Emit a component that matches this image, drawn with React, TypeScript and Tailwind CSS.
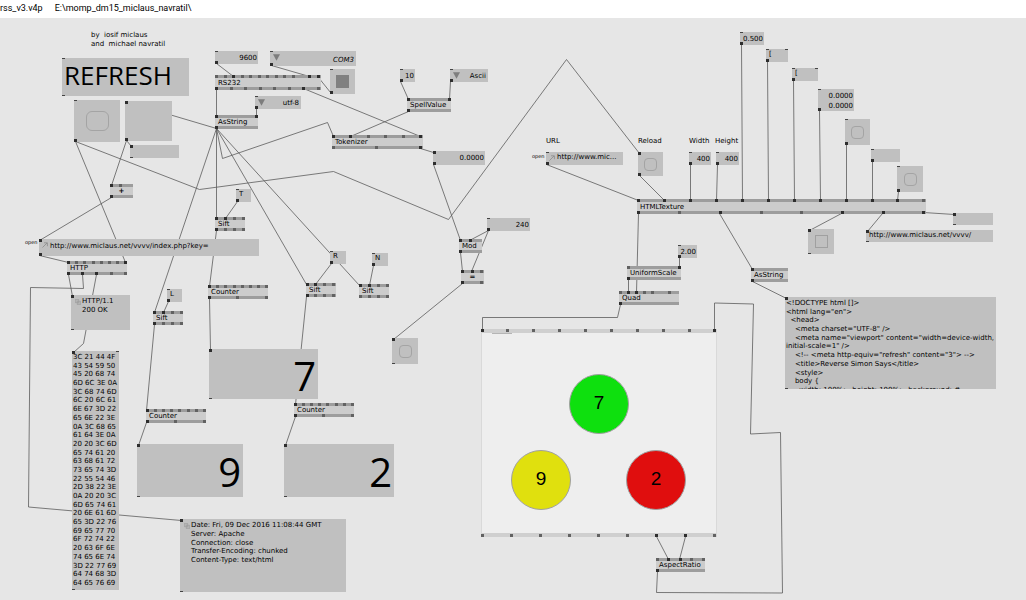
import React from "react";

/* Height of the title strip; node and wire coordinates are in window space. */
const STRIP = 18;

type Box = { x: number; y: number; w: number; h: number };

/* Pins are listed by centre x; a trailing * marks a connected pin. */
function Pins({ list, x, edge, onBar }: { list: string; x: number; edge: "top" | "bottom"; onBar?: boolean }) {
  return (
    <>
      {list.split(" ").filter(Boolean).map((p) => {
        const linked = p.endsWith("*");
        const left = parseInt(p, 10) - 2 - x;
        const size = linked ? "h-[3px] bg-[#2e2e2e]" : onBar ? "h-[3px] bg-[#626262]" : "h-px bg-[#444444]";
        const side = edge === "top" ? "top-0" : "bottom-0";
        return <span key={p} className={`pointer-events-none absolute w-[3px] ${side} ${size}`} style={{ left }} />;
      })}
    </>
  );
}

function place(b: Box) {
  return { left: b.x, top: b.y - STRIP, width: b.w, height: b.h };
}

/* ---------- operator nodes ---------- */

type Op = Box & { label: string; ins: string; outs: string; center?: boolean };

const ops: Op[] = [
  { label: "RS232", x: 215, y: 75, w: 106, h: 15, ins: "217 226 234* 243 251 260 268 277 285 294 310* 319*", outs: "217* 232 246 261 275 290 304* 319" },
  { label: "AsString", x: 215, y: 115, w: 43, h: 14, ins: "217* 257*", outs: "217*" },
  { label: "SpellValue", x: 407, y: 98, w: 44, h: 14, ins: "409* 450*", outs: "409*" },
  { label: "Tokenizer", x: 332, y: 135, w: 91, h: 14, ins: "334* 351* 369 386 404 421*", outs: "334 377 421*" },
  { label: "+", x: 110, y: 184, w: 23, h: 14, ins: "112* 121", outs: "112*", center: true },
  { label: "HTTP", x: 67, y: 261, w: 60, h: 14, ins: "69* 77 85 94 102 110 118 126*", outs: "69* 83* 97* 112 126" },
  { label: "Sift", x: 215, y: 217, w: 30, h: 14, ins: "217* 226* 235 244", outs: "217* 226 235 244" },
  { label: "Counter", x: 208, y: 285, w: 60, h: 14, ins: "210* 218 226 235 243 251 259 267", outs: "210* 238 267" },
  { label: "Sift", x: 153, y: 311, w: 30, h: 14, ins: "155* 164* 173 182", outs: "155* 164 173 182" },
  { label: "Sift", x: 306, y: 283, w: 30, h: 14, ins: "308* 316* 325 334", outs: "308* 316 325 334" },
  { label: "Sift", x: 359, y: 284, w: 30, h: 14, ins: "361* 370* 379 388", outs: "361 370 379 388" },
  { label: "Counter", x: 146, y: 409, w: 60, h: 14, ins: "148* 156 164 172 180 189 197 205", outs: "148* 176 205" },
  { label: "Counter", x: 294, y: 403, w: 60, h: 14, ins: "296* 304 312 320 328 337 345 353", outs: "296* 324 353" },
  { label: "Mod", x: 459, y: 239, w: 23, h: 14, ins: "461* 471*", outs: "461*" },
  { label: "=", x: 461, y: 270, w: 23, h: 14, ins: "463* 473* 482", outs: "463* 482", center: true },
  { label: "HTMLTexture", x: 637, y: 199, w: 289, h: 15, ins: "639* 665* 691* 717* 743* 769* 795* 821* 847* 873* 898* 924", outs: "639* 680 721* 762 802 843* 884* 924*" },
  { label: "UniformScale", x: 627, y: 266, w: 54, h: 14, ins: "629 680*", outs: "629*" },
  { label: "Quad", x: 619, y: 291, w: 60, h: 14, ins: "621 629* 637* 645 653 670", outs: "621*" },
  { label: "AsString", x: 751, y: 268, w: 37, h: 14, ins: "753*", outs: "753*" },
  { label: "AspectRatio", x: 656, y: 558, w: 49, h: 14, ins: "658 669* 681* 692 704", outs: "658*" },
];

function Operator(op: Op) {
  return (
    <div className="absolute flex items-center border-y-[3px] border-[#9d9d9d] bg-[#cccccc]" style={place(op)}>
      <span className={op.center ? "flex-1 text-center font-bold" : "pl-[3px]"}>{op.label}</span>
      <div className="absolute inset-x-0 -inset-y-[3px]">
        <Pins list={op.ins} x={op.x} edge="top" onBar />
        <Pins list={op.outs} x={op.x} edge="bottom" onBar />
      </div>
    </div>
  );
}

/* ---------- value and string boxes ---------- */

type Field = Box & { name: string; value: string; ins?: string; outs?: string; look?: "right" | "left" | "huge" | "title" | "link" };

const fields: Field[] = [
  { name: "Refresh", value: "REFRESH", x: 62, y: 58, w: 127, h: 38, ins: "64", outs: "64", look: "title" },
  { name: "Key", value: "", x: 125, y: 101, w: 47, h: 40, ins: "127*", outs: "127*" },
  { name: "Key value", value: "", x: 130, y: 145, w: 49, h: 13, ins: "132*", outs: "132" },
  { name: "Baud rate", value: "9600", x: 215, y: 51, w: 43, h: 13, ins: "217", outs: "217*", look: "right" },
  { name: "Spell value", value: "10", x: 400, y: 69, w: 15, h: 13, ins: "402", outs: "402*", look: "right" },
  { name: "Token", value: "0.0000", x: 433, y: 151, w: 52, h: 14, ins: "435*", outs: "435*", look: "right" },
  { name: "Filter T", value: "T", x: 236, y: 189, w: 15, h: 13, ins: "238", outs: "238*" },
  { name: "Filter L", value: "L", x: 167, y: 289, w: 15, h: 13, ins: "169", outs: "169*" },
  { name: "Filter R", value: "R", x: 330, y: 251, w: 16, h: 13, ins: "332", outs: "332*" },
  { name: "Filter N", value: "N", x: 372, y: 253, w: 16, h: 13, ins: "374", outs: "374*" },
  { name: "Divisor", value: "240", x: 487, y: 218, w: 43, h: 13, ins: "489", outs: "489*", look: "right" },
  { name: "Green count", value: "7", x: 209, y: 349, w: 109, h: 50, ins: "211*", outs: "211", look: "huge" },
  { name: "Yellow count", value: "9", x: 137, y: 444, w: 106, h: 53, ins: "139*", outs: "139", look: "huge" },
  { name: "Red count", value: "2", x: 284, y: 444, w: 110, h: 53, ins: "286*", outs: "286", look: "huge" },
  { name: "Request URL", value: "http://www.miclaus.net/vvvv/index.php?key=", x: 39, y: 239, w: 220, h: 17, ins: "41*", outs: "41*", look: "link" },
  { name: "Page URL", value: "http://www.mic...", x: 546, y: 152, w: 77, h: 13, ins: "548", outs: "548*", look: "link" },
  { name: "Width value", value: "400", x: 689, y: 152, w: 22, h: 13, ins: "691", outs: "691*", look: "right" },
  { name: "Height value", value: "400", x: 716, y: 152, w: 23, h: 13, ins: "718", outs: "718*", look: "right" },
  { name: "Zoom", value: "0.500", x: 740, y: 32, w: 24, h: 13, ins: "742", outs: "742*", look: "right" },
  { name: "Script", value: "[", x: 766, y: 49, w: 22, h: 13, ins: "768 787", outs: "768*" },
  { name: "Style", value: "[", x: 792, y: 68, w: 26, h: 13, ins: "794 817", outs: "794*" },
  { name: "Events", value: "", x: 871, y: 149, w: 29, h: 13, ins: "873", outs: "873*" },
  { name: "Current URL", value: "http://www.miclaus.net/vvvv/", x: 866, y: 230, w: 127, h: 12, ins: "868*", outs: "868" },
  { name: "Error", value: "", x: 953, y: 213, w: 40, h: 12, ins: "955*", outs: "955" },
  { name: "Scale", value: "2.00", x: 678, y: 245, w: 19, h: 13, ins: "680", outs: "680*", look: "right" },
];

const fieldLooks = {
  left: "pb-[3px] pl-[3px]",
  right: "text-right pr-px",
  link: "pb-1 pl-[11px]",
  title: "pb-1 pl-[2px] font-['Open_Sans',sans-serif] text-[26px]",
  huge: "text-right pr-[2px] pt-[2px] font-['Open_Sans',sans-serif] text-[40px]",
};

function FieldBox(f: Field) {
  const look = f.look ?? "left";
  return (
    <div className="absolute bg-[#c0c0c0]" style={place(f)}>
      {look === "link" && (
        <svg className="absolute top-[3px] left-[3px] size-[6px]" viewBox="0 0 6 6" fill="none" stroke="#8c8c8c" strokeWidth="0.8">
          <path d="M0.5 5.5 5 1M2 0.8h3.4v3.4" />
        </svg>
      )}
      <input aria-label={f.name} defaultValue={f.value} className={`block h-full w-full bg-transparent outline-none ${fieldLooks[look]}`} />
      <Pins list={f.ins ?? ""} x={f.x} edge="top" />
      <Pins list={f.outs ?? ""} x={f.x} edge="bottom" />
    </div>
  );
}

/* ---------- enum boxes ---------- */

type Enum = Box & { name: string; value: string; ins: string; outs: string; italic?: boolean };

const enums: Enum[] = [
  { name: "Port", value: "COM3", x: 270, y: 51, w: 86, h: 15, ins: "272", outs: "272*", italic: true },
  { name: "Encoding", value: "utf-8", x: 255, y: 96, w: 46, h: 13, ins: "257", outs: "257*" },
  { name: "Format", value: "Ascii", x: 450, y: 69, w: 38, h: 13, ins: "452", outs: "452*" },
];

function EnumBox(e: Enum) {
  return (
    <div className="absolute bg-[#c0c0c0]" style={place(e)}>
      <svg className="absolute top-[3px] left-[3px] size-[7px]" viewBox="0 0 7 7">
        <path d="M0 0.3h7L3.5 6.8z" fill="#7d7d7d" />
      </svg>
      <select
        aria-label={e.name}
        defaultValue={e.value}
        className={`block h-full w-full appearance-none bg-transparent pr-[2px] [text-align-last:right] outline-none ${e.italic ? "italic pt-[3px]" : "pt-px"}`}
      >
        <option>{e.value}</option>
      </select>
      <Pins list={e.ins} x={e.x} edge="top" />
      <Pins list={e.outs} x={e.x} edge="bottom" />
    </div>
  );
}

/* ---------- bangs and toggles ---------- */

type Bang = Box & { name: string; ins: string; outs: string; kind?: "large" | "square" | "on" };

const bangs: Bang[] = [
  { name: "Refresh bang", x: 74, y: 100, w: 46, h: 42, ins: "76", outs: "76*", kind: "large" },
  { name: "Port open", x: 330, y: 69, w: 25, h: 25, ins: "332", outs: "332*", kind: "on" },
  { name: "Match", x: 392, y: 338, w: 26, h: 26, ins: "394*", outs: "394" },
  { name: "Reload page", x: 638, y: 152, w: 25, h: 24, ins: "640*", outs: "640*" },
  { name: "Mouse input", x: 845, y: 119, w: 25, h: 26, ins: "847", outs: "847*" },
  { name: "Enabled", x: 897, y: 166, w: 26, h: 26, ins: "899", outs: "899*" },
  { name: "Is loading", x: 808, y: 229, w: 26, h: 25, ins: "810*", outs: "810", kind: "square" },
];

const bangMarks = {
  small: "size-[13px] rounded-[4px] border border-[#a4a4a4]",
  large: "h-5 w-[23px] rounded-[6px] border border-[#a4a4a4]",
  square: "size-[13px] border border-[#a0a0a0]",
  on: "size-[13px] bg-[#808080]",
};

function BangBox(b: Bang) {
  return (
    <div className="absolute bg-[#c0c0c0]" style={place(b)}>
      <button type="button" aria-label={b.name} className="flex h-full w-full items-center justify-center">
        <span className={bangMarks[b.kind ?? "small"]} />
      </button>
      <Pins list={b.ins} x={b.x} edge="top" />
      <Pins list={b.outs} x={b.x} edge="bottom" />
    </div>
  );
}

/* ---------- multi-line readouts ---------- */

type Readout = Box & { lines: string[]; ins: string; outs: string; look: string; stack?: boolean };

const hexDump = [
  "3C 21 44 4F", "43 54 59 50", "45 20 68 74", "6D 6C 3E 0A", "3C 68 74 6D", "6C 20 6C 61", "6E 67 3D 22",
  "65 6E 22 3E", "0A 3C 68 65", "61 64 3E 0A", "20 20 3C 6D", "65 74 61 20", "63 68 61 72", "73 65 74 3D",
  "22 55 54 46", "2D 38 22 3E", "0A 20 20 3C", "6D 65 74 61", "20 6E 61 6D", "65 3D 22 76", "69 65 77 70",
  "6F 72 74 22", "20 63 6F 6E", "74 65 6E 74", "3D 22 77 69", "64 74 68 3D", "64 65 76 69",
];

const pageSource = [
  "<!DOCTYPE html []>",
  '<html lang="en">',
  "  <head>",
  '    <meta charset="UTF-8" />',
  '    <meta name="viewport" content="width=device-width,',
  'initial-scale=1" />',
  '    <!-- <meta http-equiv="refresh" content="3"> -->',
  "    <title>Reverse Simon Says</title>",
  "    <style>",
  "    body {",
  "      width: 100%;   height: 100%;   background: #",
];

const headers = [
  "Date: Fri, 09 Dec 2016 11:08:44 GMT",
  "Server: Apache",
  "Connection: close",
  "Transfer-Encoding: chunked",
  "Content-Type: text/html",
];

const readouts: Readout[] = [
  { lines: ["HTTP/1.1", "200 OK"], x: 71, y: 295, w: 59, h: 35, ins: "73*", outs: "73", look: "h-[19px] pt-[2px] pl-[11px]", stack: true },
  { lines: hexDump, x: 72, y: 351, w: 47, h: 239, ins: "74* 118", outs: "74", look: "h-[236px] pt-[2px] pl-px" },
  { lines: headers, x: 180, y: 519, w: 166, h: 73, ins: "182*", outs: "182", look: "h-[45px] pt-[2px] pl-[11px]", stack: true },
  { lines: pageSource, x: 785, y: 297, w: 211, h: 92, ins: "787*", outs: "787", look: "h-[97px] pt-[2px] pl-px" },
  { lines: ["0.0000", "0.0000"], x: 818, y: 89, w: 36, h: 22, ins: "820", outs: "820*", look: "h-full items-end pt-[3px] pb-px pr-px" },
];

function ReadoutBox(r: Readout) {
  return (
    <div className="absolute overflow-hidden bg-[#c0c0c0]" style={place(r)}>
      {r.stack && (
        <svg className="absolute top-1 left-1 size-[6px]" viewBox="0 0 6 6" fill="#b4b4b4" stroke="#9a9a9a" strokeWidth="0.6">
          <path d="M0.3 0.3h3.4v3.4H0.3zM2.3 2.3h3.4v3.4H2.3z" />
        </svg>
      )}
      <div className={`flex flex-col justify-between whitespace-pre ${r.look}`}>
        {r.lines.map((line, i) => (
          <span key={i} className="leading-[8px]">{line}</span>
        ))}
      </div>
      <Pins list={r.ins} x={r.x} edge="top" />
      <Pins list={r.outs} x={r.x} edge="bottom" />
    </div>
  );
}

/* ---------- wires ---------- */

const wires = [
  "217,63 234,76", "272,65 310,76", "319,77 331,92", "217,89 217,116", "257,108 257,116", "126,101 217,128",
  "304,88 421,136", "401,81 409,99", "451,81 450,99", "409,111 351,136", "217,128 223,158 328,122 334,136",
  "217,128 217,218", "217,128 155,312", "217,128 307,284", "217,128 360,285", "421,148 434,152", "434,164 461,240",
  "76,141 200,189 334,171 449,219 567,59 640,153", "76,141 126,262", "127,140 112,185", "127,140 132,146",
  "112,197 40,240", "40,255 69,262", "69,274 73,296", "97,274 84,343 74,352", "83,274 84,288 31,287 29,506.5 182,520",
  "238,201 226,218", "169,301 164,312", "332,263 316,284", "374,265 370,285", "217,230 210,286", "155,324 147,410",
  "307,296 296,404", "210,298 211,350", "147,422 139,445", "296,416 286,445", "489,230 470,240", "489,230 472,271",
  "461,252 463,271", "463,283 394,339", "547,164 639,200", "640,175 665,200", "691,164 691,200", "718,164 717,200",
  "742,44 743,200", "768,61 769,200", "794,80 795,200", "820,110 821,200", "847,144 847,200", "873,161 873,200",
  "899,191 898,200", "639,213 637,292", "720,213 753,269", "753,281 787,298", "842,213 810,230", "883,213 868,231",
  "924,212 955,214", "680,257 680,267", "629,279 629,292", "621,304 618,317 483,317 483,330", "657,536 669,559",
  "686,536 680,559", "658,571 657,592 783,592.5 781,432 751,433.5 754,303.5 715,302.5 715,330",
];

/* ---------- canvas captions ---------- */

const captions = [
  { text: "by  iosif miclaus", x: 91, y: 31 },
  { text: "and  michael navratil", x: 91, y: 40 },
  { text: "URL", x: 546, y: 137 },
  { text: "Reload", x: 638, y: 137 },
  { text: "Width", x: 689, y: 137 },
  { text: "Height", x: 715, y: 137 },
];

const tinyCaptions = [
  { text: "open", x: 25, y: 238 },
  { text: "open", x: 532, y: 152 },
];

/* ---------- renderer window ---------- */

const discs = [
  { label: "7", cx: 599, cy: 404, fill: "bg-[#0ee00e]" },
  { label: "9", cx: 541, cy: 480, fill: "bg-[#e0e00e]" },
  { label: "2", cx: 656, cy: 480, fill: "bg-[#e00e0e]" },
];

const renderer: Box = { x: 481, y: 329, w: 236, h: 208 };

function Renderer() {
  return (
    <div className="absolute border-x border-y-4 border-[#cfcfcf] border-x-[#d9d9d9] bg-[#eeeeee]" style={place(renderer)}>
      <div className="absolute top-0 left-[10px] h-px w-5 bg-[#b5b5b5]" />
      {discs.map((d) => (
        <div
          key={d.label}
          className={`absolute flex size-15 items-center justify-center rounded-full border border-[#a0a0a0] pb-[3px] font-['Liberation_Sans',sans-serif] text-[19px] ${d.fill}`}
          style={{ left: d.cx - 30 - renderer.x - 1, top: d.cy - 30 - renderer.y - 4 }}
        >
          {d.label}
        </div>
      ))}
      <div className="absolute -inset-x-px -inset-y-1">
        <Pins list="483* 508 534 560 586 612 638 664 690 715*" x={renderer.x} edge="top" onBar />
        <Pins list="483 512 541 570 599 628 657* 686* 715" x={renderer.x} edge="bottom" onBar />
      </div>
    </div>
  );
}

export default function App() {
  return (
    <div className="flex min-h-screen flex-col bg-[#e6e6e6] text-black">
      <header className="flex h-[18px] items-center gap-3 bg-white font-[Roboto,sans-serif] text-[9px] whitespace-pre">
        <span>rss_v3.v4p</span>
        <span>E:\momp_dm15_miclaus_navratil\</span>
      </header>
      <main className="relative flex-1 overflow-hidden font-['DejaVu_Sans',sans-serif] text-[7px] leading-[8px]">
        <svg className="absolute inset-0 h-full w-full" fill="none" stroke="#5c5c5c" strokeWidth="0.8" aria-hidden="true">
          <g transform={`translate(-0.5 ${0.5 - STRIP})`}>
            {wires.map((points) => (
              <polyline key={points} points={points} />
            ))}
          </g>
        </svg>
        {captions.map((c) => (
          <span key={c.text} className="absolute whitespace-pre" style={{ left: c.x, top: c.y - STRIP }}>{c.text}</span>
        ))}
        {tinyCaptions.map((c) => (
          <span key={c.x} className="absolute text-[5px]" style={{ left: c.x, top: c.y - STRIP }}>{c.text}</span>
        ))}
        <Renderer />
        {fields.map((f) => <FieldBox key={f.name} {...f} />)}
        {enums.map((e) => <EnumBox key={e.name} {...e} />)}
        {bangs.map((b) => <BangBox key={b.name} {...b} />)}
        {readouts.map((r) => <ReadoutBox key={r.y} {...r} />)}
        {ops.map((op) => <Operator key={`${op.x}-${op.y}`} {...op} />)}
      </main>
    </div>
  );
}
